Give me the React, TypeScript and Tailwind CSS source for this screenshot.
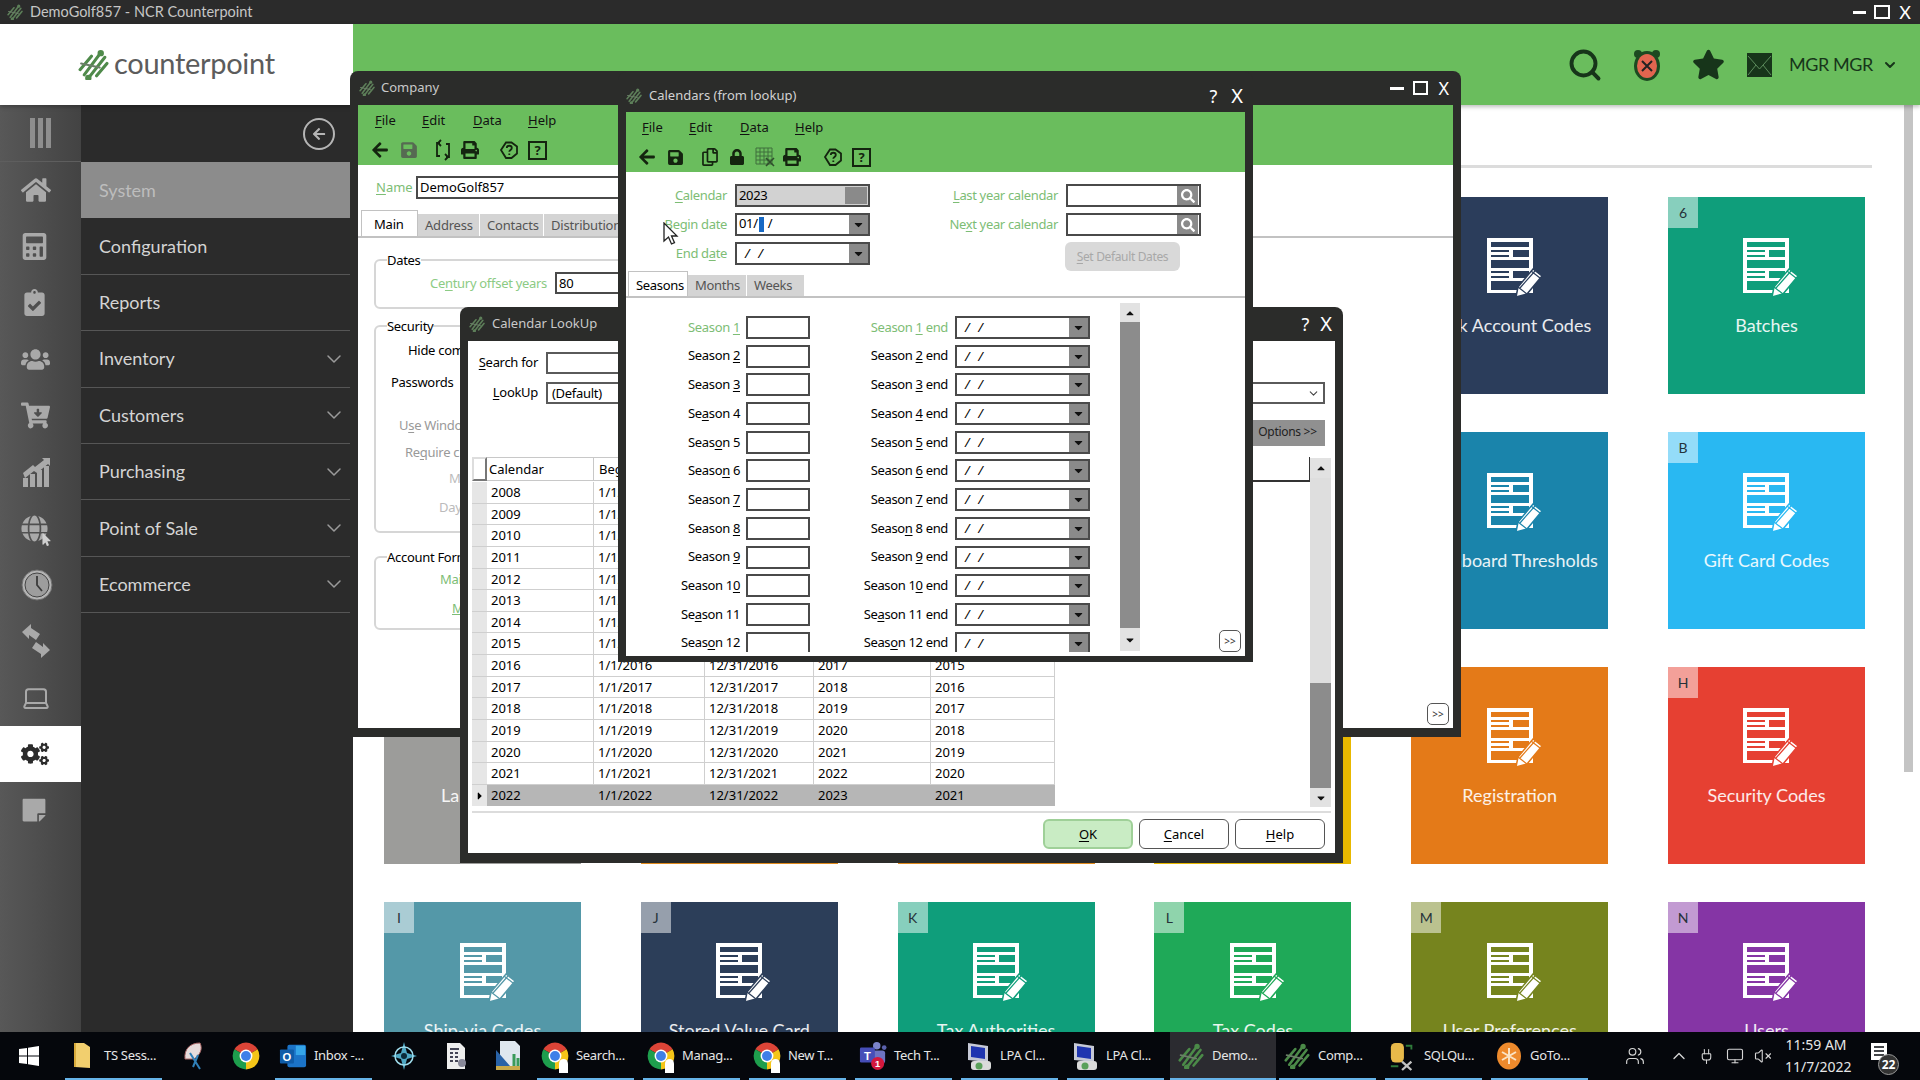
import { ReactNode } from "react"
import { ChevronDown, ChevronUp, Laptop, Monitor, Plug, Search, Users, VolumeX } from "lucide-react"
import {
  FaArrowLeft, FaCartArrowDown, FaClipboardCheck, FaCalculator, FaCogs, FaGlobe, FaHome,
  FaLock, FaPrint, FaRegCopy, FaSave, FaStar, FaStickyNote, FaUsers,
  FaCaretDown, FaCaretUp, FaCaretRight, FaSearch, FaMousePointer,
} from "react-icons/fa"

// text with & marks the access key letter, like a windows form label
const hot = (s: string): ReactNode => {
  const i = s.indexOf("&")
  if (i < 0) return s
  return (
    <>
      {s.slice(0, i)}
      <u className="underline-offset-2">{s[i + 1]}</u>
      {s.slice(i + 2)}
    </>
  )
}

const Logo = ({ size = 30, color = "#4f8a4a" }: { size?: number; color?: string }) => (
  <svg width={size} height={size} viewBox="0 0 30 30" fill="none" stroke={color} strokeWidth="3" strokeLinecap="round">
    <path d="M2 20 13 7" />
    <path d="M6 25 21 5" />
    <path d="M11 27 26 8" />
    <path d="M18 26 28 14" />
    <path d="M3 14 21 18" stroke="#6b7f68" strokeWidth="2" />
    <circle cx="22" cy="4" r="1.6" fill={color} />
    <circle cx="10" cy="28" r="1.6" fill={color} />
  </svg>
)

const TileIcon = ({ color }: { color: string }) => (
  <svg width="58" height="60" viewBox="0 0 58 60">
    <path
      fillRule="evenodd"
      fill="white"
      d="M0 0H46V55H0ZM4 4V9H42V4ZM4 12V14H22V12ZM4 17V19H22V17ZM26 12V19H42V12ZM4 22V30H42V22ZM4 33V35H22V33ZM4 38V40H22V38ZM26 33V40H42V33ZM4 43V52H42V43Z"
    />
    <path d="M29 59 31 49 46 31 55 38 40 56Z" fill="white" stroke={color} strokeWidth="1.5" />
    <path d="M33 50 48 33M31 49 40 56M44 33 53 40" stroke={color} strokeWidth="1.2" fill="none" />
  </svg>
)

const tiles = [
  { key: "1a" }, { key: "1b" }, { key: "1c" }, { key: "1d" },
  { key: "1e", label: "Bank Account Codes", hex: "#2b3d5b", bg: "bg-[#2b3d5b]", badge: "5" },
  { key: "1f", label: "Batches", hex: "#0f9e7b", bg: "bg-[#0f9e7b]", badge: "6" },
  { key: "2a" }, { key: "2b" }, { key: "2c" }, { key: "2d" },
  { key: "2e", label: "Dashboard Thresholds", hex: "#1a84ab", bg: "bg-[#1a84ab]", badge: "A" },
  { key: "2f", label: "Gift Card Codes", hex: "#29b8f2", bg: "bg-[#29b8f2]", badge: "B" },
  { key: "3a", label: "Languages", hex: "#9c9c9a", bg: "bg-[#9c9c9a]", badge: "D" },
  { key: "3b", label: "Locations", hex: "#e08a1c", bg: "bg-[#e08a1c]", badge: "E" },
  { key: "3c", label: "Paycodes", hex: "#e08a1c", bg: "bg-[#e08a1c]", badge: "F" },
  { key: "3d", label: "Reasons", hex: "#e8b800", bg: "bg-[#e8b800]", badge: "G" },
  { key: "3e", label: "Registration", hex: "#e47a18", bg: "bg-[#e47a18]", badge: "Q" },
  { key: "3f", label: "Security Codes", hex: "#e64032", bg: "bg-[#e64032]", badge: "H" },
  { key: "4a", label: "Ship-via Codes", hex: "#5498a8", bg: "bg-[#5498a8]", badge: "I" },
  { key: "4b", label: "Stored Value Card", hex: "#2c3e59", bg: "bg-[#2c3e59]", badge: "J" },
  { key: "4c", label: "Tax Authorities", hex: "#0f9e7b", bg: "bg-[#0f9e7b]", badge: "K" },
  { key: "4d", label: "Tax Codes", hex: "#1fa958", bg: "bg-[#1fa958]", badge: "L" },
  { key: "4e", label: "User Preferences", hex: "#76841e", bg: "bg-[#76841e]", badge: "M" },
  { key: "4f", label: "Users", hex: "#8535a5", bg: "bg-[#8535a5]", badge: "N" },
]

const Tile = ({ label, hex, bg, badge }: { label?: string; hex?: string; bg?: string; badge?: string }) => {
  if (!label) return <div className="h-[197px]" />
  return (
    <div className={`relative h-[197px] flex flex-col items-center pt-[41px] text-white ${bg}`}>
      <div className="absolute left-0 top-0 w-[30px] h-[31px] bg-white/50 flex items-center justify-center text-[14px] text-[#26323a]">
        {badge}
      </div>
      <div className="pl-[12px] h-[60px]">
        <TileIcon color={hex!} />
      </div>
      <p className="mt-[16px] text-[18px] leading-[22px] whitespace-nowrap text-white/90">{label}</p>
    </div>
  )
}

const BarsUp = () => (
  <svg width="32" height="32" viewBox="0 0 32 32" fill="currentColor">
    <rect x="2" y="22" width="5" height="9" />
    <rect x="9" y="18" width="5" height="13" />
    <rect x="16" y="14" width="5" height="17" />
    <rect x="23" y="10" width="5" height="21" />
    <path d="M2 17 12 9l2 2 9-7-2-2h8v8l-2-2-11 9-3-2-9 7Z" />
  </svg>
)

const Swap = () => (
  <svg width="30" height="34" viewBox="0 0 30 34" fill="currentColor">
    <path d="M1 8 10 0v4l9 6-4 6-7-5v4Z" />
    <path d="M29 26 20 34v-4l-9-6 4-6 7 5v-4Z" />
  </svg>
)

const ClockDisc = () => (
  <svg width="32" height="32" viewBox="0 0 32 32">
    <circle cx="16" cy="16" r="15" fill="#b4b4b4" stroke="#6f6f6f" strokeWidth="1" />
    <circle cx="16" cy="16" r="12" fill="#9d9d9d" stroke="#454545" strokeWidth="1" />
    <path d="M16 7v9l5 6" stroke="#3a3a3a" strokeWidth="1.8" fill="none" />
  </svg>
)

const railIcons = [
  <FaHome size={30} />,
  <FaCalculator size={27} />,
  <FaClipboardCheck size={27} />,
  <FaUsers size={29} />,
  <FaCartArrowDown size={29} />,
  <BarsUp />,
  <span className="relative block">
    <FaGlobe size={27} />
    <FaMousePointer size={13} className="absolute right-[-5px] bottom-[-4px] text-[#cfcfcf]" />
  </span>,
  <ClockDisc />,
  <Swap />,
  <Laptop size={30} strokeWidth={1.6} />,
  <FaCogs size={28} />,
  <FaStickyNote size={26} />,
]

const navRows = [
  { name: "Configuration" },
  { name: "Reports" },
  { name: "Inventory", more: true },
  { name: "Customers", more: true },
  { name: "Purchasing", more: true },
  { name: "Point of Sale", more: true },
  { name: "Ecommerce", more: true },
]

const Sidebar = () => (
  <div className="flex shrink-0 h-full">
    <div className="w-[81px] bg-gradient-to-r from-[#585858] to-[#434343] flex flex-col">
      <div className="h-[57px] flex items-center justify-center gap-[3px] border-b border-[#5e5e5e]">
        <span className="w-[5px] h-[30px] bg-[#8e8e8e]" />
        <span className="w-[5px] h-[30px] bg-[#8e8e8e]" />
        <span className="w-[5px] h-[30px] bg-[#8e8e8e]" />
      </div>
      {railIcons.map((icon, i) => (
        <div
          key={i}
          className={
            i === 10
              ? "h-[56.4px] bg-white flex items-center pl-[21px] text-[#2b2b2b]"
              : "h-[56.4px] flex items-center pl-[21px] text-[#a9a9a9]"
          }
        >
          {icon}
        </div>
      ))}
    </div>
    <div className="w-[272px] bg-[#2b2b2b] font-['Lato']">
      <div className="h-[57px] flex items-center justify-end pr-[18px]">
        <span className="w-[32px] h-[32px] rounded-full border-2 border-[#b5b5b5] flex items-center justify-center">
          <FaArrowLeft size={14} className="text-[#b5b5b5]" />
        </span>
      </div>
      <div className="h-[56.4px] bg-[#8c8c8c] flex items-center pl-[18px] text-[18px] text-[#bdbdbd]">System</div>
      {navRows.map((r) => (
        <div key={r.name} className="h-[56.4px] border-b border-[#565656] flex items-center justify-between pl-[18px] pr-[7px] text-[18px] text-[#d4d4d4]">
          {r.name}
          {r.more && <ChevronDown size={24} strokeWidth={1.5} className="text-[#9a9a9a]" />}
        </div>
      ))}
    </div>
  </div>
)

const WinTitle = ({ title, controls }: { title: string; controls: ReactNode }) => (
  <div className="h-[34px] shrink-0 flex items-center pl-[1px] pr-[4px] text-[#c9c9c9]">
    <Logo size={16} color="#5d7f59" />
    <span className="ml-[6px] text-[13px]">{title}</span>
    <div className="ml-auto flex items-center text-white">{controls}</div>
  </div>
)

const HelpIcon = () => (
  <svg width="20" height="20" viewBox="0 0 20 20" fill="none" stroke="#14240f" strokeWidth="1.8">
    <path d="M7 2.5h5.5L18 6.5v7L12.5 18H7L2 10Z" />
    <path d="M7.8 8c0-3 5-3 5 0 0 2-2.5 2-2.5 3.8M10.3 13.5v1.5" />
  </svg>
)

const QuestionBox = () => (
  <span className="w-[19px] h-[19px] border-2 border-[#14240f] flex items-center justify-center text-[13px] font-bold leading-none text-[#14240f]">?</span>
)

const Refresh = () => (
  <svg width="18" height="22" viewBox="0 0 18 22" fill="none" stroke="#14240f" strokeWidth="1.8">
    <path d="M6 4H3v13h3M12 18h3V5h-3" />
    <path d="M7 1 4 4l3 3M11 15l3 3-3 3" />
  </svg>
)

const GridX = () => (
  <svg width="20" height="20" viewBox="0 0 20 20" fill="none" stroke="#3f6f3c" strokeWidth="1">
    <path d="M1 1h16v16H1zM1 5h16M1 9h16M1 13h16M5 1v16M9 1v16M13 1v16" />
    <path d="M11 11l8 8M19 11l-8 8" strokeWidth="1.6" stroke="#2f4d2c" />
  </svg>
)

const Menu = () => (
  <div className="flex text-[13px] leading-[18px] text-[#111]">
    <span className="w-[47px]">{hot("&File")}</span>
    <span className="w-[51px]">{hot("&Edit")}</span>
    <span className="w-[55px]">{hot("&Data")}</span>
    <span>{hot("&Help")}</span>
  </div>
)

const Combo = ({ children }: { children?: ReactNode }) => (
  <div className="w-[135px] h-[23px] border-2 border-[#4a4a4a] bg-white flex items-center text-[13px] shrink-0">
    <span className="pl-[2px] flex-1 whitespace-nowrap leading-none">{children}</span>
    <span className="w-[20px] h-full bg-[#8a8a8a] flex items-center justify-center text-[#111] border-l border-white">
      <FaCaretDown size={13} />
    </span>
  </div>
)

const Slashes = () => <span className="pl-[6px] italic [word-spacing:6px]">/ /</span>

const LookupField = () => (
  <div className="w-[135px] h-[23px] border-2 border-[#4a4a4a] bg-white flex justify-end shrink-0">
    <span className="w-[21px] h-full mr-[1px] bg-[#8a8a8a] flex items-center justify-center text-white">
      <FaSearch size={14} />
    </span>
  </div>
)

const Arrows = () => <span className="w-[22px] h-[22px] rounded-[5px] border border-[#555] bg-white flex items-center justify-center text-[10px] leading-none text-[#333]">&gt;&gt;</span>

const CompanyWindow = () => (
  <div className="absolute z-20 left-[350px] top-[71px] w-[1111px] h-[666px] bg-[#2b2c2a] rounded-t-lg px-[8px] pb-[9px] flex flex-col">
    <WinTitle
      title="Company"
      controls={
        <>
          <span className="w-[14px] h-[3px] bg-white mr-[9px]" />
          <span className="w-[15px] h-[14px] border-2 border-white mr-[10px]" />
          <span className="text-[18px] leading-none">X</span>
        </>
      }
    />
    <div className="flex-1 bg-white flex flex-col overflow-hidden">
      <div className="h-[60px] shrink-0 bg-[#6abd5d] pl-[17px] pt-[6px]">
        <Menu />
        <div className="flex items-center h-[26px] mt-[8px] text-[#14240f]">
          <FaArrowLeft size={18} className="-ml-[4px] mr-[11px]" />
          <FaSave size={18} className="text-[#566a52] mr-[16px]" />
          <Refresh />
          <FaPrint size={18} className="ml-[9px] mr-[20px]" />
          <HelpIcon />
          <span className="ml-[9px]"><QuestionBox /></span>
        </div>
      </div>
      <div className="flex items-center h-[23px] mt-[11px] pl-[18px] text-[13px]">
        <span className="w-[40px] text-[#7dbd75]">{hot("&Name")}</span>
        <div className="w-[500px] h-[23px] border-2 border-[#4a4a4a] pl-[2px] leading-[19px] text-black">DemoGolf857</div>
      </div>
      <div className="flex items-end h-[26px] mt-[13px] pl-[3px] border-b-2 border-[#c2c2c2] text-[13px] tracking-[-0.2px] text-[#555] shrink-0">
        <span className="w-[57px] h-[26px] pl-[12px] pt-[4px] bg-white border border-b-0 border-[#c2c2c2] text-black">Main</span>
        <span className="w-[62px] h-[22px] pl-[7px] leading-[22px] bg-[#d4d4d4] border-r border-white">Address</span>
        <span className="w-[64px] h-[22px] pl-[7px] leading-[22px] bg-[#d4d4d4] border-r border-white">Contacts</span>
        <span className="w-[90px] h-[22px] pl-[7px] leading-[22px] bg-[#d4d4d4]">Distribution</span>
      </div>
      <div className="text-[13px] leading-[18px] tracking-[-0.3px] text-black">
        <fieldset className="mt-[13px] ml-[16px] w-[700px] h-[58px] border-2 border-[#d6d6d6] rounded-md">
          <legend className="ml-[11px]">Dates</legend>
          <div className="flex items-center mt-[3px]">
            <span className="w-[171px] text-right text-[#8ccb84] whitespace-nowrap">Ce{hot("&ntury")} offset years</span>
            <span className="ml-[8px] w-[180px] h-[22px] border-2 border-[#4a4a4a] pl-[2px] leading-[18px]">80</span>
          </div>
        </fieldset>
        <fieldset className="mt-[8px] ml-[16px] w-[700px] h-[216px] border-2 border-[#d6d6d6] rounded-md">
          <legend className="ml-[11px]">Security</legend>
          <p className="mt-[6px] pl-[32px]">Hide company</p>
          <p className="mt-[14px] pl-[15px]">Passwords</p>
          <p className="mt-[25px] pl-[23px] text-[#999]">{hot("U&se")} Windows</p>
          <p className="mt-[9px] pl-[29px] text-[#999]">Re{hot("&quire")} c</p>
          <p className="mt-[8px] pl-[73px] text-[#bbb]">M</p>
          <p className="mt-[11px] pl-[63px] text-[#bbb]">Day</p>
        </fieldset>
        <fieldset className="mt-[15px] ml-[16px] w-[700px] h-[82px] border-2 border-[#d6d6d6] rounded-md">
          <legend className="ml-[11px]">Account Format</legend>
          <p className="mt-[4px] pl-[64px] text-[#7dbd75]">Main</p>
          <p className="mt-[11px] pl-[76px] text-[#7dbd75] underline">M</p>
        </fieldset>
      </div>
      <div className="mt-auto self-end mr-[4px] mb-[3px]"><Arrows /></div>
    </div>
  </div>
)

const seasonLabels = [
  ["Season &1", "Season &1 end"],
  ["Season &2", "Season &2 end"],
  ["Season &3", "Season &3 end"],
  ["Se&ason 4", "Season &4 end"],
  ["Seas&on 5", "Season &5 end"],
  ["Seaso&n 6", "Season &6 end"],
  ["Season &7", "Season &7 end"],
  ["Season &8", "Seaso&n 8 end"],
  ["Season &9", "Season &9 end"],
  ["Season 1&0", "Season 1&0 end"],
  ["Se&ason 11", "Se&ason 11 end"],
  ["Seas&on 12", "Seas&on 12 end"],
]

const CalendarsWindow = () => (
  <div className="absolute z-20 left-[618px] top-[72px] w-[635px] h-[590px] bg-[#2b2c2a] rounded-t-lg px-[8px] pb-[6px] flex flex-col text-[13px]">
    <div className="h-[40px] shrink-0 flex items-center pt-[7px] pr-[2px] text-[#d2d2d2]">
      <Logo size={16} color="#5d7f59" />
      <span className="ml-[7px] text-[13px]">Calendars (from lookup)</span>
      <span className="ml-auto text-[18px] text-white leading-none">?</span>
      <span className="ml-[14px] text-[20px] text-white leading-none">X</span>
    </div>
    <div className="flex-1 bg-white overflow-hidden flex flex-col">
      <div className="h-[60px] shrink-0 bg-[#6abd5d] pl-[16px] pt-[6px]">
        <Menu />
        <div className="flex items-center h-[26px] mt-[8px] text-[#14240f]">
          <FaArrowLeft size={18} className="-ml-[4px] mr-[11px]" />
          <FaSave size={17} className="mr-[17px]" />
          <FaRegCopy size={18} className="mr-[10px]" />
          <FaLock size={16} className="mr-[10px]" />
          <GridX />
          <FaPrint size={18} className="ml-[8px] mr-[22px]" />
          <HelpIcon />
          <span className="ml-[9px]"><QuestionBox /></span>
        </div>
      </div>
      <div className="pt-[12px] shrink-0 tracking-[-0.35px]">
        <div className="flex items-center h-[23px]">
          <span className="w-[101px] text-right text-[#7dbd75]">{hot("&Calendar")}</span>
          <div className="ml-[8px] w-[135px] h-[23px] border-2 border-[#4a4a4a] bg-[#d2d2d2] flex items-center pl-[2px] pr-[1px] justify-between">
            2023<span className="w-[22px] h-[17px] bg-[#8a8a8a]" />
          </div>
          <span className="w-[188px] text-right text-[#7dbd75]">{hot("&Last")} year calendar</span>
          <div className="ml-[8px]"><LookupField /></div>
        </div>
        <div className="flex items-center h-[23px] mt-[6px]">
          <span className="w-[101px] text-right text-[#7dbd75]">{hot("&Begin")} date</span>
          <div className="ml-[8px]">
            <Combo>01/<span className="inline-block w-[5px] h-[15px] bg-[#1769c4] align-middle mx-[1px]" /> /</Combo>
          </div>
          <span className="w-[188px] text-right text-[#7dbd75]">Ne{hot("&xt")} year calendar</span>
          <div className="ml-[8px]"><LookupField /></div>
        </div>
        <div className="flex items-start h-[23px] mt-[6px]">
          <span className="w-[101px] text-right text-[#7dbd75] leading-[23px]">End d{hot("&ate")}</span>
          <div className="ml-[8px]">
            <Combo><Slashes /></Combo>
          </div>
          <span className="ml-[195px] w-[115px] h-[29px] rounded-md bg-[#d9d9d9] text-[#a8a8a8] text-[12px] flex items-center justify-center whitespace-nowrap">{hot("&Set")} Default Dates</span>
        </div>
      </div>
      <div className="flex items-end h-[25px] mt-[8px] pl-[2px] border-b-2 border-[#c2c2c2] text-[#555] tracking-[-0.3px] shrink-0">
        <span className="w-[60px] h-[25px] pl-[7px] pt-[4px] bg-white border border-b-0 border-[#c2c2c2] text-black">Seasons</span>
        <span className="w-[59px] h-[21px] pl-[7px] leading-[21px] bg-[#d4d4d4] border-r border-white">Months</span>
        <span className="w-[57px] h-[21px] pl-[7px] leading-[21px] bg-[#d4d4d4]">Weeks</span>
      </div>
      <div className="flex h-[354px] overflow-hidden shrink-0">
        <div className="w-[494px] pt-[18px] shrink-0 tracking-[-0.35px]">
          {seasonLabels.map(([a, b], i) => (
            <div key={a} className="flex items-center h-[23px] mb-[5.7px]">
              <span className={i === 0 ? "w-[114px] text-right text-[#7dbd75]" : "w-[114px] text-right text-black"}>{hot(a)}</span>
              <span className="ml-[6px] w-[64px] h-[23px] border-2 border-[#4a4a4a]" />
              <span className={i === 0 ? "w-[138px] text-right text-[#7dbd75]" : "w-[138px] text-right text-black"}>{hot(b)}</span>
              <div className="ml-[7px]">
                <Combo><Slashes /></Combo>
              </div>
            </div>
          ))}
        </div>
        <div className="mt-[5px] w-[20px] h-[348px] flex flex-col shrink-0 text-[#111]">
          <span className="h-[19px] bg-[#e2e2e2] flex items-center justify-center"><FaCaretUp size={12} /></span>
          <span className="flex-1 bg-[#8c8c8c]" />
          <span className="h-[23px] bg-[#e2e2e2] flex items-center justify-center"><FaCaretDown size={12} /></span>
        </div>
        <div className="ml-[79px] self-end"><Arrows /></div>
      </div>
    </div>
  </div>
)

const lookupRows = [
  ["2008", "1/1/2008", "12/31/2008", "2009", "2007"],
  ["2009", "1/1/2009", "12/31/2009", "2010", "2008"],
  ["2010", "1/1/2010", "12/31/2010", "2011", "2009"],
  ["2011", "1/1/2011", "12/31/2011", "2012", "2010"],
  ["2012", "1/1/2012", "12/31/2012", "2013", "2011"],
  ["2013", "1/1/2013", "12/31/2013", "2014", "2012"],
  ["2014", "1/1/2014", "12/31/2014", "2015", "2013"],
  ["2015", "1/1/2015", "12/31/2015", "2016", "2014"],
  ["2016", "1/1/2016", "12/31/2016", "2017", "2015"],
  ["2017", "1/1/2017", "12/31/2017", "2018", "2016"],
  ["2018", "1/1/2018", "12/31/2018", "2019", "2017"],
  ["2019", "1/1/2019", "12/31/2019", "2020", "2018"],
  ["2020", "1/1/2020", "12/31/2020", "2021", "2019"],
  ["2021", "1/1/2021", "12/31/2021", "2022", "2020"],
  ["2022", "1/1/2022", "12/31/2022", "2023", "2021"],
]

const gridCols = "grid grid-cols-[15px_107px_111px_109px_117px_124px]"

const LookupWindow = () => (
  <div className="absolute z-20 left-[460px] top-[307px] w-[883px] h-[556px] bg-[#2b2c2a] rounded-t-lg px-[8px] pb-[10px] flex flex-col text-[13px]">
    <div className="h-[34px] shrink-0 flex items-center pl-[1px] pr-[3px] text-[#c9c9c9]">
      <Logo size={16} color="#5d7f59" />
      <span className="ml-[7px]">Calendar LookUp</span>
      <span className="ml-auto text-[18px] text-white leading-none">?</span>
      <span className="ml-[11px] text-[20px] text-white leading-none">X</span>
    </div>
    <div className="flex-1 bg-white flex flex-col overflow-hidden text-black">
      <div className="h-[116px] shrink-0 flex justify-between tracking-[-0.3px]">
        <div className="pt-[11px]">
          <div className="flex items-center h-[22px]">
            <span className="w-[70px] text-right whitespace-nowrap">{hot("&Search")} for</span>
            <span className="ml-[8px] w-[280px] h-[22px] border-2 border-[#5a5a5a]" />
          </div>
          <div className="flex items-center h-[22px] mt-[8px]">
            <span className="w-[70px] text-right">{hot("&LookUp")}</span>
            <span className="ml-[8px] w-[280px] h-[22px] border-2 border-[#5a5a5a] pl-[4px] leading-[18px]">(Default)</span>
          </div>
        </div>
        <div className="pt-[41px] pr-[10px] flex flex-col items-end">
          <div className="w-[320px] h-[22px] border-2 border-[#5a5a5a] flex items-center justify-end pr-[3px]">
            <ChevronDown size={13} className="text-[#444]" />
          </div>
          <span className="mt-[16px] w-[75px] h-[26px] bg-[#909090] text-center leading-[24px] text-[12px] text-[#222] whitespace-nowrap">Options &gt;&gt;</span>
        </div>
      </div>
      <div className="flex flex-1">
        <div className="ml-[4px] w-[583px] shrink-0">
          <div className={`${gridCols} h-[23px] mb-[2px] items-stretch`}>
            <span className="bg-white border-2 border-r-[#777] border-b-[#777] border-[#ddd]" />
            <span className="pl-[2px] leading-[22px] border-y border-r border-[#c8c8c8]">Calendar</span>
            <span className="pl-[5px] leading-[22px] border-y border-r border-[#c8c8c8]">Begin date</span>
            <span className="pl-[5px] leading-[22px] border-y border-r border-[#c8c8c8]">End date</span>
            <span className="pl-[5px] leading-[22px] border-y border-r border-[#c8c8c8]">Next</span>
            <span className="pl-[5px] leading-[22px] border-y border-[#c8c8c8]">Last</span>
          </div>
          {lookupRows.map((r, i) => (
            <div key={r[0]} className={i === 14 ? `${gridCols} h-[21.64px] leading-[20px] bg-[#b6b6b6]` : `${gridCols} h-[21.64px] leading-[20px] border-b border-[#cfcfcf]`}>
              <span className="bg-[#e6e6e6] flex items-center justify-center text-black">{i === 14 && <FaCaretRight size={12} />}</span>
              {r.map((c, j) => (
                <span key={j} className={i === 14 ? "pl-[4px]" : "pl-[4px] border-r border-[#cfcfcf]"}>{c}</span>
              ))}
            </div>
          ))}
        </div>
        <div className="ml-auto mr-[4px] flex h-[350px]">
          <span className="w-[200px] h-[25px] border-r border-b-2 border-[#333]" />
          <div className="w-[21px] mt-[1px] flex flex-col text-[#111]">
            <span className="h-[20px] bg-[#e2e2e2] flex items-center justify-center"><FaCaretUp size={12} /></span>
            <span className="h-[205px] bg-[#dedede]" />
            <span className="h-[105px] bg-[#8c8c8c]" />
            <span className="h-[19px] bg-[#e2e2e2] flex items-center justify-center"><FaCaretDown size={12} /></span>
          </div>
        </div>
      </div>
      <div className="h-[42px] shrink-0 mx-[4px] border-t-2 border-[#dcdcdc] flex justify-end gap-[6px] pr-[6px] pt-[6px]">
        <span className="w-[90px] h-[30px] rounded-md border-2 border-[#9fd098] bg-[#c9ecc4] text-center leading-[26px]">{hot("&OK")}</span>
        <span className="w-[90px] h-[30px] rounded-md border border-[#555] text-center leading-[28px]">{hot("&Cancel")}</span>
        <span className="w-[90px] h-[30px] rounded-md border border-[#555] text-center leading-[28px]">{hot("&Help")}</span>
      </div>
    </div>
  </div>
)

const Chrome = () => (
  <svg width="28" height="28" viewBox="0 0 48 48">
    <path d="M24 24 4.1 12.5A23 23 0 0 1 43.9 12.5Z" fill="#dc4437" />
    <path d="M24 24 43.9 12.5A23 23 0 0 1 24 47Z" fill="#f5c518" />
    <path d="M24 24 24 47A23 23 0 0 1 4.1 12.5Z" fill="#1e9e4d" />
    <circle cx="24" cy="24" r="11" fill="white" />
    <circle cx="24" cy="24" r="8.5" fill="#3f7fe8" />
  </svg>
)

const ChromePinned = () => (
  <span className="relative block w-[28px] h-[28px]">
    <Chrome />
    <span className="absolute right-[1px] bottom-[-3px] w-[9px] h-[14px] rounded-t-full rounded-b-sm bg-white" />
  </span>
)

const Folder = () => (
  <svg width="22" height="28" viewBox="0 0 22 28">
    <path d="M3 1h9l6 4v21l-15-1Z" fill="#f2cf6e" />
    <path d="M3 1v24" stroke="#d9ab3c" strokeWidth="2" />
  </svg>
)

const Snip = () => (
  <svg width="28" height="30" viewBox="0 0 28 30">
    <path d="M20 2C10 2 4 8 5 18l9 0C20 14 23 8 20 2Z" fill="#e6dcdc" stroke="#a66" strokeWidth="1" />
    <path d="M10 12 20 28M18 14 13 26" stroke="#2f7fb8" strokeWidth="2" fill="none" />
  </svg>
)

const Outlook = () => (
  <svg width="30" height="28" viewBox="0 0 30 28">
    <rect x="9" y="2" width="20" height="24" rx="2" fill="#1b73c7" />
    <rect x="18" y="3" width="10" height="10" fill="#35a5e8" />
    <rect x="1" y="7" width="15" height="15" rx="1" fill="#0f5ca8" />
    <text x="8.5" y="19" textAnchor="middle" fontSize="12" fontWeight="700" fill="white" fontFamily="Liberation Sans, sans-serif">O</text>
  </svg>
)

const Compass = () => (
  <svg width="28" height="30" viewBox="0 0 28 30">
    <path d="M14 1 17 12 27 15 17 18 14 29 11 18 1 15 11 12Z" fill="#4fa8c4" />
    <circle cx="14" cy="15" r="9" fill="none" stroke="#9fdcec" strokeWidth="1.5" />
    <circle cx="14" cy="15" r="3" fill="#0b2b3a" />
  </svg>
)

const DocA = () => (
  <svg width="24" height="28" viewBox="0 0 24 28">
    <path d="M3 1h13l5 5v21H3Z" fill="#eee" />
    <path d="M6 7h9M6 11h3M11 11h3M6 15h3M11 15h3M6 19h3M11 19h3" stroke="#445" strokeWidth="2" />
    <circle cx="18" cy="21" r="4" fill="#889" />
  </svg>
)

const DocB = () => (
  <svg width="28" height="32" viewBox="0 0 28 32">
    <path d="M6 1h15l5 5v22H6Z" fill="#dfe7ef" />
    <path d="M2 10 16 26H2Z" fill="#2a63a8" />
    <path d="M20 14v12M24 18v8" stroke="#3a9a5a" strokeWidth="3" />
    <rect x="2" y="26" width="24" height="4" fill="#c9a94a" />
  </svg>
)

const Teams = () => (
  <svg width="30" height="32" viewBox="0 0 30 32">
    <circle cx="19" cy="5" r="4" fill="#7b83c9" />
    <circle cx="27" cy="7" r="2.5" fill="#5b62ad" />
    <rect x="13" y="10" width="15" height="14" rx="3" fill="#6d74c2" />
    <rect x="1" y="7" width="16" height="16" rx="1.5" fill="#464eb8" />
    <text x="9" y="20" textAnchor="middle" fontSize="12" fontWeight="700" fill="white" fontFamily="Liberation Sans, sans-serif">T</text>
    <circle cx="20" cy="24" r="7" fill="#d4183d" />
    <text x="20" y="28" textAnchor="middle" fontSize="10" fontWeight="700" fill="white" fontFamily="Liberation Sans, sans-serif">1</text>
  </svg>
)

const Lpa = () => (
  <svg width="28" height="30" viewBox="0 0 28 30">
    <path d="M3 2 23 5V21L3 19Z" fill="#c6c9d6" />
    <path d="M6 5 20 7V18L6 16Z" fill="#1f35b0" />
    <rect x="6" y="20" width="20" height="9" rx="3" fill="#dadada" />
    <circle cx="14" cy="25" r="3.5" fill="#5aa05a" />
  </svg>
)

const Sql = () => (
  <svg width="30" height="32" viewBox="0 0 30 32">
    <rect x="2" y="2" width="14" height="21" rx="5" fill="#e8b94a" />
    <path d="M18 5h6v4M2 27h8" stroke="#2f7a3a" strokeWidth="2" fill="none" />
    <path d="M14 22 24 31M24 22 14 31" stroke="#c2c2c2" strokeWidth="2.5" />
  </svg>
)

const GoTo = () => (
  <svg width="26" height="28" viewBox="0 0 26 28">
    <ellipse cx="13" cy="14" rx="12" ry="13.5" fill="#ee8a2c" />
    <path d="M13 6v16M6 10l14 8M20 10 6 18" stroke="#fbe3c4" strokeWidth="2" />
  </svg>
)

const WinFlag = () => (
  <svg width="20" height="20" viewBox="0 0 20 20" fill="white">
    <path d="M0 3 8 2v7.5H0ZM9 1.8 20 0v9.5H9ZM0 10.5h8V18L0 17ZM9 10.5h11V20L9 18.2Z" />
  </svg>
)

const IconSlot = ({ icon }: { icon: ReactNode }) => <div className="w-[52px] h-full flex items-center justify-center shrink-0">{icon}</div>

const AppSlot = ({ icon, label, active }: { icon: ReactNode; label: string; active?: boolean }) => (
  <div className={active ? "relative w-[106px] h-full flex items-center pl-[7px] shrink-0 bg-[#2b2b30]" : "relative w-[106px] h-full flex items-center pl-[7px] shrink-0"}>
    <span className="w-[28px] flex justify-center">{icon}</span>
    <span className="ml-[7px] whitespace-nowrap tracking-[-0.3px]">{label}</span>
    <span className={active ? "absolute bottom-0 left-0 right-0 h-[2px] bg-[#66b3e8]" : "absolute bottom-0 left-[3px] w-[97px] h-[2px] bg-[#66b3e8]"} />
  </div>
)

const Taskbar = () => (
  <div className="h-[48px] shrink-0 bg-[#05070c] flex items-center text-[13px] text-[#e6e6e6]">
    <div className="w-[62px] h-full pl-[19px] flex items-center shrink-0"><WinFlag /></div>
    <AppSlot icon={<Folder />} label="TS Sess..." />
    <IconSlot icon={<Snip />} />
    <IconSlot icon={<Chrome />} />
    <AppSlot icon={<Outlook />} label="Inbox -..." />
    <IconSlot icon={<Compass />} />
    <IconSlot icon={<DocA />} />
    <IconSlot icon={<DocB />} />
    <AppSlot icon={<ChromePinned />} label="Search..." />
    <AppSlot icon={<ChromePinned />} label="Manag..." />
    <AppSlot icon={<ChromePinned />} label="New T..." />
    <AppSlot icon={<Teams />} label="Tech T..." />
    <AppSlot icon={<Lpa />} label="LPA Cl..." />
    <AppSlot icon={<Lpa />} label="LPA Cl..." />
    <AppSlot active icon={<Logo size={26} color="#4b8a48" />} label="Demo..." />
    <AppSlot icon={<Logo size={26} color="#4b8a48" />} label="Comp..." />
    <AppSlot icon={<Sql />} label="SQLQu..." />
    <AppSlot icon={<GoTo />} label="GoTo..." />
    <div className="ml-[31px] flex items-center text-[#d6d6d6]">
      <Users size={20} strokeWidth={1.4} />
      <ChevronUp size={20} strokeWidth={1.6} className="ml-[24px]" />
      <Plug size={17} strokeWidth={1.5} className="ml-[9px]" />
      <Monitor size={18} strokeWidth={1.5} className="ml-[11px]" />
      <VolumeX size={18} strokeWidth={1.5} className="ml-[10px]" />
    </div>
    <div className="ml-[13px] w-[62px] text-center text-[14px] leading-[22px] whitespace-nowrap">
      <p>11:59 AM</p>
      <p>11/7/2022</p>
    </div>
    <div className="relative ml-[22px] w-[24px] h-[28px]">
      <svg width="20" height="22" viewBox="0 0 20 22" fill="white">
        <path d="M2 1h16v17h-5l-3 3v-3H2Z" />
        <path d="M5 5h10M5 9h10M5 13h10" stroke="#05070c" strokeWidth="1.6" />
      </svg>
      <span className="absolute right-[-6px] bottom-[-5px] w-[21px] h-[21px] rounded-full bg-[#333] border border-[#999] flex items-center justify-center text-[12px] font-bold text-white">22</span>
    </div>
  </div>
)

const Alarm = () => (
  <svg width="30" height="34" viewBox="0 0 30 34">
    <circle cx="6" cy="6" r="4" fill="#1d4a21" />
    <circle cx="24" cy="6" r="4" fill="#1d4a21" />
    <ellipse cx="15" cy="18" rx="13" ry="15" fill="#1d4a21" />
    <ellipse cx="15" cy="18" rx="10" ry="12" fill="#e2654f" />
    <path d="M10 13l10 10M20 13 10 23" stroke="#222" strokeWidth="2" />
  </svg>
)

const Mail = () => (
  <svg width="26" height="26" viewBox="0 0 26 26">
    <rect x="0" y="1" width="25" height="24" fill="#17351a" />
    <path d="M1 4 12.5 17 24 4M1 23 9 13M24 23 16 13" stroke="#5c8c5c" strokeWidth="1" fill="none" />
  </svg>
)

export default function App() {
  return (
    <div className="relative w-[1920px] h-[1080px] overflow-hidden flex flex-col bg-white font-['Noto_Sans']">
      <div className="h-[24px] shrink-0 bg-[#2b2b2b] flex items-center pl-[7px] pr-[9px] font-['Lato'] text-[14.5px] text-[#c6c6c6]">
        <Logo size={16} color="#5d7f59" />
        <span className="ml-[7px]">DemoGolf857 - NCR Counterpoint</span>
        <div className="ml-auto flex items-center text-white">
          <span className="w-[13px] h-[3px] bg-white mr-[8px]" />
          <span className="w-[16px] h-[14px] border-2 border-white mr-[9px]" />
          <span className="text-[18px] leading-none">X</span>
        </div>
      </div>
      <div className="h-[81px] shrink-0 flex relative z-10 shadow-[0_2px_4px_rgba(0,0,0,0.25)]">
        <div className="w-[353px] bg-white flex items-center pl-[78px]">
          <Logo size={31} color="#4f8a4a" />
          <span className="ml-[5px] -mt-[5px] font-['Lato'] text-[29px] leading-none tracking-[-0.3px] text-[#5c5c5c]">counterpoint</span>
        </div>
        <div className="flex-1 bg-[#6abd5d] flex items-center justify-end pr-[22px] text-[#17351a]">
          <Search size={36} strokeWidth={2.6} />
          <span className="ml-[29px]"><Alarm /></span>
          <FaStar size={33} className="ml-[30px]" />
          <span className="ml-[22px]"><Mail /></span>
          <span className="ml-[16px] font-['Lato'] text-[18px] tracking-[-0.4px]">MGR MGR</span>
          <ChevronDown size={16} strokeWidth={3} className="ml-[9px]" />
        </div>
      </div>
      <div className="flex-1 min-h-0 flex">
        <Sidebar />
        <div className="relative flex-1 overflow-hidden pt-[60px] font-['Lato']">
          <div className="h-[3px] ml-[31px] mr-[48px] bg-[#dcdcdc]" />
          <div className="mt-[29px] ml-[31px] grid grid-cols-[repeat(6,197px)] gap-x-[59.8px] gap-y-[38px]">
            {tiles.map((t) => (
              <Tile key={t.key} label={t.label} hex={t.hex} bg={t.bg} badge={t.badge} />
            ))}
          </div>
          <div className="absolute right-[7px] top-0 w-[9px] h-[667px] bg-[#c4c4c4]" />
        </div>
      </div>
      <Taskbar />
      <CompanyWindow />
      <LookupWindow />
      <CalendarsWindow />
      <svg className="absolute z-30 left-[663px] top-[222px]" width="16" height="24" viewBox="0 0 16 24">
        <path d="M1 1v18l4.5-4 3 7 3-1.3-3-6.7H14Z" fill="white" stroke="#222" strokeWidth="1.3" />
      </svg>
    </div>
  )
}
